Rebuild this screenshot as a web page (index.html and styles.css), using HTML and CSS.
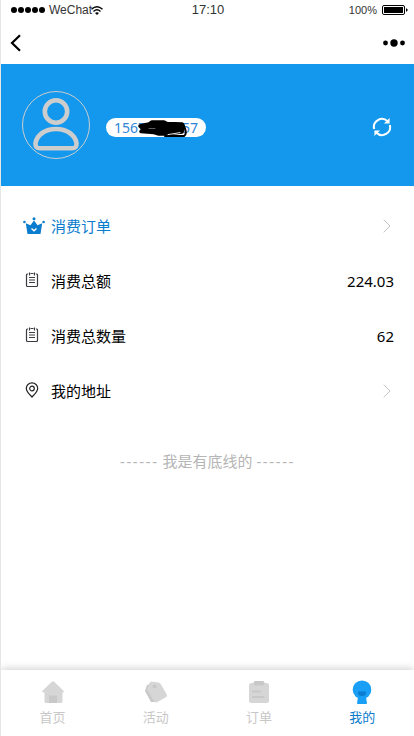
FILE: index.html
```html
<!DOCTYPE html>
<html lang="zh-CN">
<head>
  <meta charset="UTF-8" />
  <meta name="viewport" content="width=device-width, initial-scale=1.0" />
  <title>我的</title>
  <link rel="stylesheet" href="styles.css">
</head>
<body>

  <!-- 状态栏 -->
  <div class="status">
    <div class="status-left">
      <i class="dot"></i><i class="dot"></i><i class="dot"></i><i class="dot"></i><i class="dot"></i>
      <span class="carrier">WeChat</span>
      <svg class="wifi" width="12" height="9" viewBox="0 0 12 9" fill="none" stroke="#000" stroke-width="1.4">
        <path d="M.5 3.2Q6-1.7 11.5 3.2M2.5 5.4Q6 2.3 9.5 5.4" />
        <path d="M4 7Q6 5.300 8 7L6 9z" fill="#000" stroke="none" />
      </svg>
    </div>
    <div class="time">17:10</div>
    <div class="status-right">
      <span>100%</span>
      <svg width="26" height="10" viewBox="0 0 26 10">
        <rect x=".5" y=".5" width="22" height="9" rx="1.500" fill="none" stroke="#000" />
        <rect x="2" y="2" width="19" height="6" fill="#000" />
        <path d="M24 3l2 2-2 2z" fill="#000" />
      </svg>
    </div>
  </div>

  <!-- 导航栏 -->
  <div class="navbar">
    <svg width="12" height="18" viewBox="0 0 12 18" fill="none" stroke="#000" stroke-width="2.200"><path d="M10 1.200L2 9l8 7.800" /></svg>
    <svg width="22" height="8" viewBox="0 0 22 8"><circle cx="2.500" cy="4" r="2.400" /><circle cx="11" cy="4" r="3.700" /><circle cx="19.500" cy="4" r="2.400" /></svg>
  </div>

  <!-- 用户信息 -->
  <div class="user">
    <div class="avatar">
      <svg width="66" height="66" viewBox="0 0 66 66" fill="none" stroke="#cdcdcd" stroke-width="4.600">
        <circle cx="33" cy="19.500" r="11.200" />
        <path d="M17 56.200H49Q54 56.200 53.500 51C52 43 44 37 33 37S14 43 12.500 51Q12 56.200 17 56.200z" />
      </svg>
    </div>
    <div class="phone">
      <span>1567</span><span>57</span>
      <svg class="scribble" width="52" height="20" viewBox="0 0 52 20" fill="none" stroke="#000" stroke-linecap="round" stroke-linejoin="round">
        <path d="M3 7L12 5 15 3 27 3 30 4.500 45 5 46 8 45 13 28 15 22 15 17 13.500 4 12.500 6 10z" fill="#000" stroke-width="3.600" />
        <path d="M46 5Q51 15 47 17L28 17" stroke-width="2" />
        <path d="M12 9.500h6" stroke="#7c8790" stroke-width=".7" />
        <path d="M31 15.600l12-2" stroke="#fff" stroke-width=".9" />
      </svg>
    </div>
    <svg class="refresh" width="20" height="20" viewBox="0 0 20 20" fill="none" stroke="#fff" stroke-width="2">
      <path d="M2.200 12A8 8 0 0 1 15.500 4.200M17.800 8A8 8 0 0 1 4.500 15.800" />
      <path d="M17.600 1v5.600H12zM2.400 19v-5.600H8z" fill="#fff" stroke="none" />
    </svg>
  </div>

  <!-- 菜单列表 -->
  <div class="list">
    <div class="item active">
      <div class="icon">
        <svg width="22" height="18" viewBox="0 0 22 18" fill="#0b7cce">
          <path d="M2.800 6.200L7.500 8.300 11 3.500l3.500 4.800 4.700-2.100L17.500 17h-13z" />
          <circle cx="11" cy="1.700" r="1.500" /><circle cx="1.400" cy="5" r="1.300" /><circle cx="20.600" cy="5" r="1.300" />
          <path d="M8.500 11.500l2.500 2.300 2.500-2.300" fill="none" stroke="#fff" stroke-width="1.400" />
        </svg>
      </div>
      <span>消费订单</span>
      <svg class="arrow" width="8" height="14" viewBox="0 0 8 14"><path d="M.7.700L7 7 .7 13.300" /></svg>
    </div>
    <div class="item">
      <div class="icon">
        <svg width="14" height="16" viewBox="0 0 14 16" fill="none" stroke="#3d3a40" stroke-width="1.200">
          <path d="M3 2H2.200Q1.500 2 1.500 3V13.500Q1.500 14.500 2.500 14.500H11.500Q12.500 14.500 12.500 13.500V3Q12.500 2 11.800 2H11M5.500 1.500H8.500M4.500 .5v3M9.500 .5v3M4 5.500H10M4 8H10M4 10.500H10" />
        </svg>
      </div>
      <span>消费总额</span>
      <span class="value">224.03</span>
    </div>
    <div class="item">
      <div class="icon">
        <svg width="14" height="16" viewBox="0 0 14 16" fill="none" stroke="#3d3a40" stroke-width="1.200">
          <path d="M3 2H2.200Q1.500 2 1.500 3V13.500Q1.500 14.500 2.500 14.500H11.500Q12.500 14.500 12.500 13.500V3Q12.500 2 11.800 2H11M5.500 1.500H8.500M4.500 .5v3M9.500 .5v3M4 5.500H10M4 8H10M4 10.500H10" />
        </svg>
      </div>
      <span>消费总数量</span>
      <span class="value">62</span>
    </div>
    <div class="item">
      <div class="icon">
        <svg width="14" height="16" viewBox="0 0 14 16" fill="none" stroke="#222" stroke-width="1.200">
          <path d="M7 15C4 11.800 1.300 9.300 1.300 6.400a5.700 5.500 0 0 1 11.400 0C12.700 9.300 10 11.800 7 15z" />
          <circle cx="7" cy="6.500" r="2.300" />
        </svg>
      </div>
      <span>我的地址</span>
      <svg class="arrow" width="8" height="14" viewBox="0 0 8 14"><path d="M.7.700L7 7 .7 13.300" /></svg>
    </div>
  </div>

  <div class="bottom-line"><span class="dash">------</span> 我是有底线的 <span class="dash">------</span></div>

  <!-- 底部菜单 -->
  <div class="tabbar">
    <div class="tab">
      <svg width="24" height="24" viewBox="0 0 24 24" fill="#d6d6d6">
        <path d="M12 1.200Q12.800 1.200 13.500 2L23 11.200Q23 12.500 21.500 12.500V21.500Q21.500 23 20 23H5Q3.500 23 3.500 21.500V12.500Q1 12.500 1 11.200L10.500 2Q11.200 1.200 12 1.200z" />
        <path d="M8 15.500h8V23H8z" fill="#c8c8c8" />
      </svg>
      <span>首页</span>
    </div>
    <div class="tab">
      <svg width="24" height="24" viewBox="0 0 24 24">
        <path d="M3 5L1 11 7 22 11 22 8 4z" fill="#c8c8c8" />
        <path d="M7 1.500L14.500 2.500Q16 3 17 4.500L23 15Q23 16.500 21.500 17.500L12.500 22.500Q11 22.500 10 21L3 10Q3 8 5.500 3z" fill="#d6d6d6" />
        <circle cx="10.500" cy="6.500" r="2" fill="#c8c8c8" />
      </svg>
      <span>活动</span>
    </div>
    <div class="tab">
      <svg width="24" height="24" viewBox="0 0 24 24">
        <rect x="2" y="3" width="20" height="20" rx="2.500" fill="#d6d6d6" />
        <rect x="6.500" y="1" width="11" height="4.500" rx="2" fill="#c8c8c8" />
        <path d="M6 11.500h7M6 17h10.500" stroke="#c8c8c8" stroke-width="2.200" stroke-linecap="round" />
      </svg>
      <span>订单</span>
    </div>
    <div class="tab on">
      <svg width="24" height="24" viewBox="0 0 24 24" fill="#1a9ff6">
        <path d="M8 17h8l1 6.200Q17 24 16 24H8Q7 24 7 23.200z" />
        <circle cx="12" cy="9.700" r="9.300" />
        <path d="M8 11.500h8v1Q16 16 12 16T8 12.500z" fill="#0b7ccf" />
      </svg>
      <span>我的</span>
    </div>
  </div>

</body>
</html>
```

FILE: styles.css
```css
* {
  box-sizing: border-box;
}

body {
  margin: 0;
  height: 100vh;
  display: flex;
  flex-direction: column;
  overflow: hidden;
  border-left: 1px solid #e6e6e6;
  background: #fff;
  color: #000;
  font-family: 'Noto Sans', 'Noto Sans CJK SC', sans-serif;
  font-size: 15px;
}

svg {
  display: block;
  flex-shrink: 0;
}

/* 状态栏 */
.status {
  height: 20px;
  display: grid;
  grid-template-columns: 1fr auto 1fr;
  align-items: center;
  padding: 0 6px 0 10px;
  font-family: 'Liberation Sans', sans-serif;
  font-size: 12px;
  color: #333;
}

.status-left,
.status-right {
  display: flex;
  align-items: center;
}

.dot {
  width: 6px;
  height: 6px;
  margin-right: 1px;
  border-radius: 50%;
  background: #000;
}

.carrier {
  margin-left: 3px;
}

.wifi {
  margin-left: -1px;
}

.time {
  margin: -1px 3px 0 0;
  font-size: 13px;
}

.status-right {
  justify-content: flex-end;
  gap: 5px;
  font-size: 11px;
}

/* 导航栏 */
.navbar {
  height: 44px;
  display: flex;
  align-items: center;
  justify-content: space-between;
  padding: 2px 9px 0;
}

/* 用户信息 */
.user {
  height: 122px;
  display: flex;
  align-items: center;
  padding: 0 22px 0 21px;
  background: #1398ed;
}

.avatar {
  width: 68px;
  height: 68px;
  border: 1px solid #cdcdcd;
  border-radius: 50%;
}

.phone {
  position: relative;
  width: 100px;
  height: 19px;
  margin: 5px 0 0 16px;
  padding: 0 8px;
  display: flex;
  justify-content: space-between;
  border-radius: 10px;
  background: #fff;
  color: #2f86d8;
  font-size: 14px;
  line-height: 20px;
}

.scribble {
  position: absolute;
  left: 31px;
  top: 1px;
}

.refresh {
  margin: 4px 0 0 auto;
}

/* 菜单列表 */
.list {
  padding: 12px 20px 0 21px;
}

.item {
  height: 55px;
  display: flex;
  align-items: center;
}

.item.active {
  color: #0b7cce;
}

.icon {
  width: 29px;
  display: flex;
  padding: 0 0 2px 3px;
}

.active .icon {
  padding: 0 0 0 1px;
}

.value,
.arrow {
  margin-left: auto;
}

.arrow {
  margin-right: 3px;
  fill: none;
  stroke: #c4c4c4;
}

.bottom-line {
  margin-top: 32px;
  text-align: center;
  color: #b5b5b5;
}

.dash {
  letter-spacing: 1.6px;
}

/* 底部菜单 */
.tabbar {
  height: 66px;
  margin-top: auto;
  display: flex;
  background: #fff;
  box-shadow: 0 -1px 8px rgba(0, 0, 0, 0.2);
}

.tab {
  flex: 1;
  display: flex;
  flex-direction: column;
  align-items: center;
  padding-top: 10px;
  color: #c8c8c8;
  font-size: 13px;
  line-height: 26px;
}

.tab.on {
  color: #0b7cce;
}
```
